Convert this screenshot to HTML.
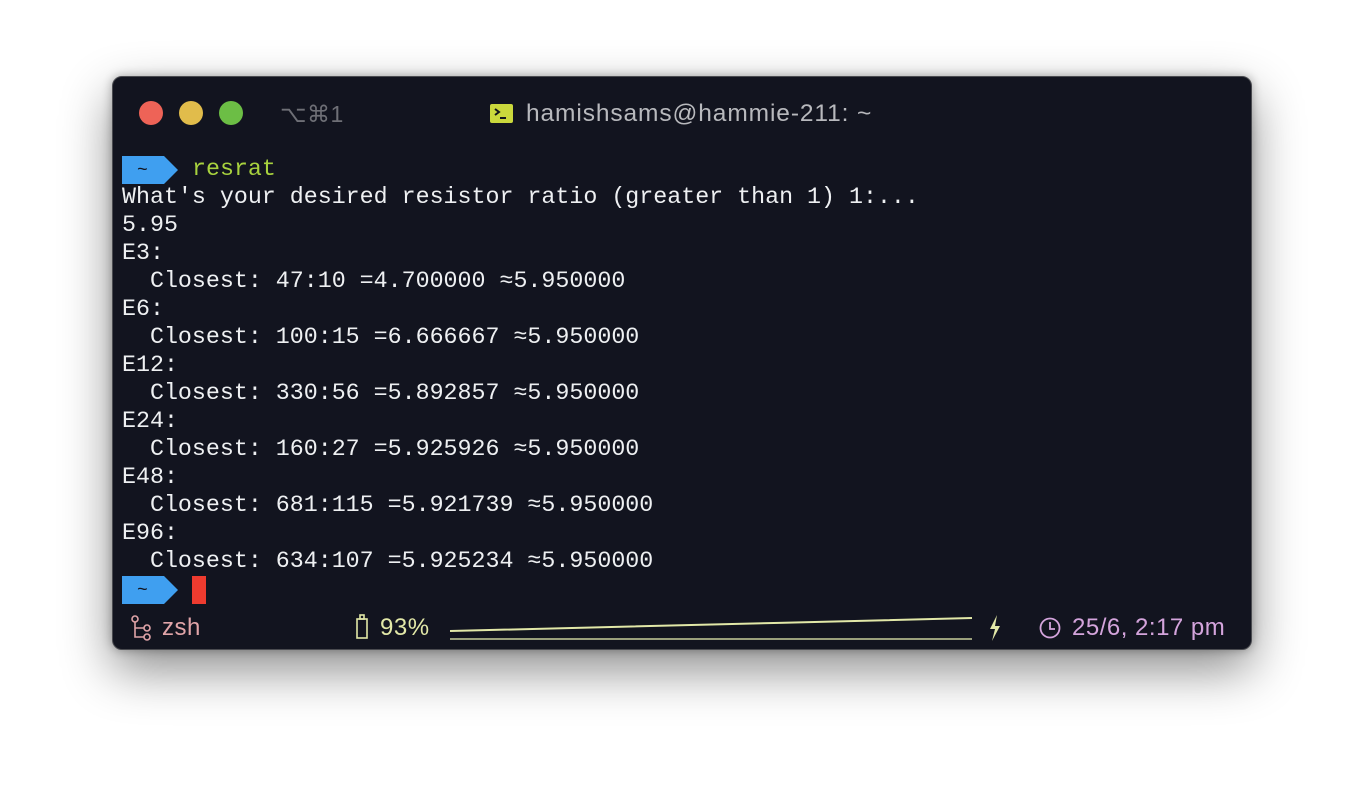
<!DOCTYPE html>
<html><head><style>
body{margin:0;width:1364px;height:798px;background:#fff;position:relative;overflow:hidden;font-family:"Liberation Sans",sans-serif}
.win{position:absolute;left:112px;top:76px;width:1140px;height:574px;background:#12141f;border-radius:10px;border:1px solid #4a4b50;box-sizing:border-box;box-shadow:0 20px 50px rgba(0,0,0,.45),0 0 10px rgba(0,0,0,.3)}
.dot{position:absolute;top:101px;width:24px;height:24px;border-radius:50%}
.mono{position:absolute;left:122px;font-family:"Liberation Mono",monospace;font-size:23.3px;color:#eef0f2;white-space:pre;line-height:28px}
.st{position:absolute;top:614px;font-size:24px;line-height:28px;letter-spacing:.5px}
</style></head><body>
<div class="win"></div>
<div class="dot" style="left:139px;background:#ee6357"></div>
<div class="dot" style="left:179px;background:#e1bc4b"></div>
<div class="dot" style="left:219px;background:#6cbe45"></div>
<div style="position:absolute;left:280px;top:100px;font-size:23px;color:#6e6f76;line-height:28px;letter-spacing:.5px">⌥⌘1</div>
<div style="position:absolute;left:490px;top:104px;width:23px;height:19px;background:#cad83c;border-radius:2px"><svg width="23" height="19"><path d="M5 5l4 3-4 3M10 14h6" stroke="#12141f" stroke-width="2" fill="none"/></svg></div>
<div style="position:absolute;left:526px;top:100px;font-size:24.5px;color:#b8b9bd;line-height:28px;letter-spacing:.9px">hamishsams@hammie-211: ~</div>
<svg style="position:absolute;left:122px;top:156px" width="58" height="28"><path d="M0 0h42l14 14-14 14H0z" fill="#3f9ff0"/><text x="15" y="19" font-family="Liberation Mono" font-size="18" fill="#12141f">~</text></svg>
<div class="mono" style="top:155px;left:192px;color:#a8d23e">resrat</div>
<div class="mono" style="top:183px">What's your desired resistor ratio (greater than 1) 1:...
5.95
E3:
  Closest: 47:10 =4.700000 ≈5.950000
E6:
  Closest: 100:15 =6.666667 ≈5.950000
E12:
  Closest: 330:56 =5.892857 ≈5.950000
E24:
  Closest: 160:27 =5.925926 ≈5.950000
E48:
  Closest: 681:115 =5.921739 ≈5.950000
E96:
  Closest: 634:107 =5.925234 ≈5.950000</div>
<svg style="position:absolute;left:122px;top:576px" width="58" height="28"><path d="M0 0h42l14 14-14 14H0z" fill="#3f9ff0"/><text x="15" y="19" font-family="Liberation Mono" font-size="18" fill="#12141f">~</text></svg>
<div style="position:absolute;left:192px;top:576px;width:14px;height:28px;background:#ee3b2f"></div>
<svg style="position:absolute;left:130px;top:615px" width="24" height="26" fill="none" stroke="#e0a4a8" stroke-width="1.6"><circle cx="5" cy="4" r="3"/><path d="M5 7v15h9M5 13h9"/><circle cx="17" cy="13" r="3"/><circle cx="17" cy="22" r="3"/></svg>
<div class="st" style="left:162px;color:#e0a4a8">zsh</div>
<svg style="position:absolute;left:355px;top:614px" width="14" height="26" fill="none" stroke="#e2e8a8" stroke-width="1.6"><rect x="2" y="5" width="10" height="19"/><rect x="5" y="1" width="4" height="4"/></svg>
<div class="st" style="left:380px;color:#e2e8a8">93%</div>
<svg style="position:absolute;left:450px;top:612px" width="524" height="30"><path d="M0 19C150 16 350 10 522 6" stroke="#e2e8a8" stroke-width="2" fill="none"/><path d="M0 27h522" stroke="#9aa07c" stroke-width="2"/></svg>
<svg style="position:absolute;left:987px;top:614px" width="16" height="28"><path d="M10 1L3 15h5l-3 12 8-15H8z" fill="#e2e8a8"/></svg>
<svg style="position:absolute;left:1039px;top:617px" width="24" height="24" fill="none" stroke="#d4a4dc" stroke-width="1.8"><circle cx="11" cy="11" r="9.5"/><path d="M11 5v7h5"/></svg>
<div class="st" style="left:1072px;color:#d4a4dc">25/6, 2:17 pm</div>
</body></html>
